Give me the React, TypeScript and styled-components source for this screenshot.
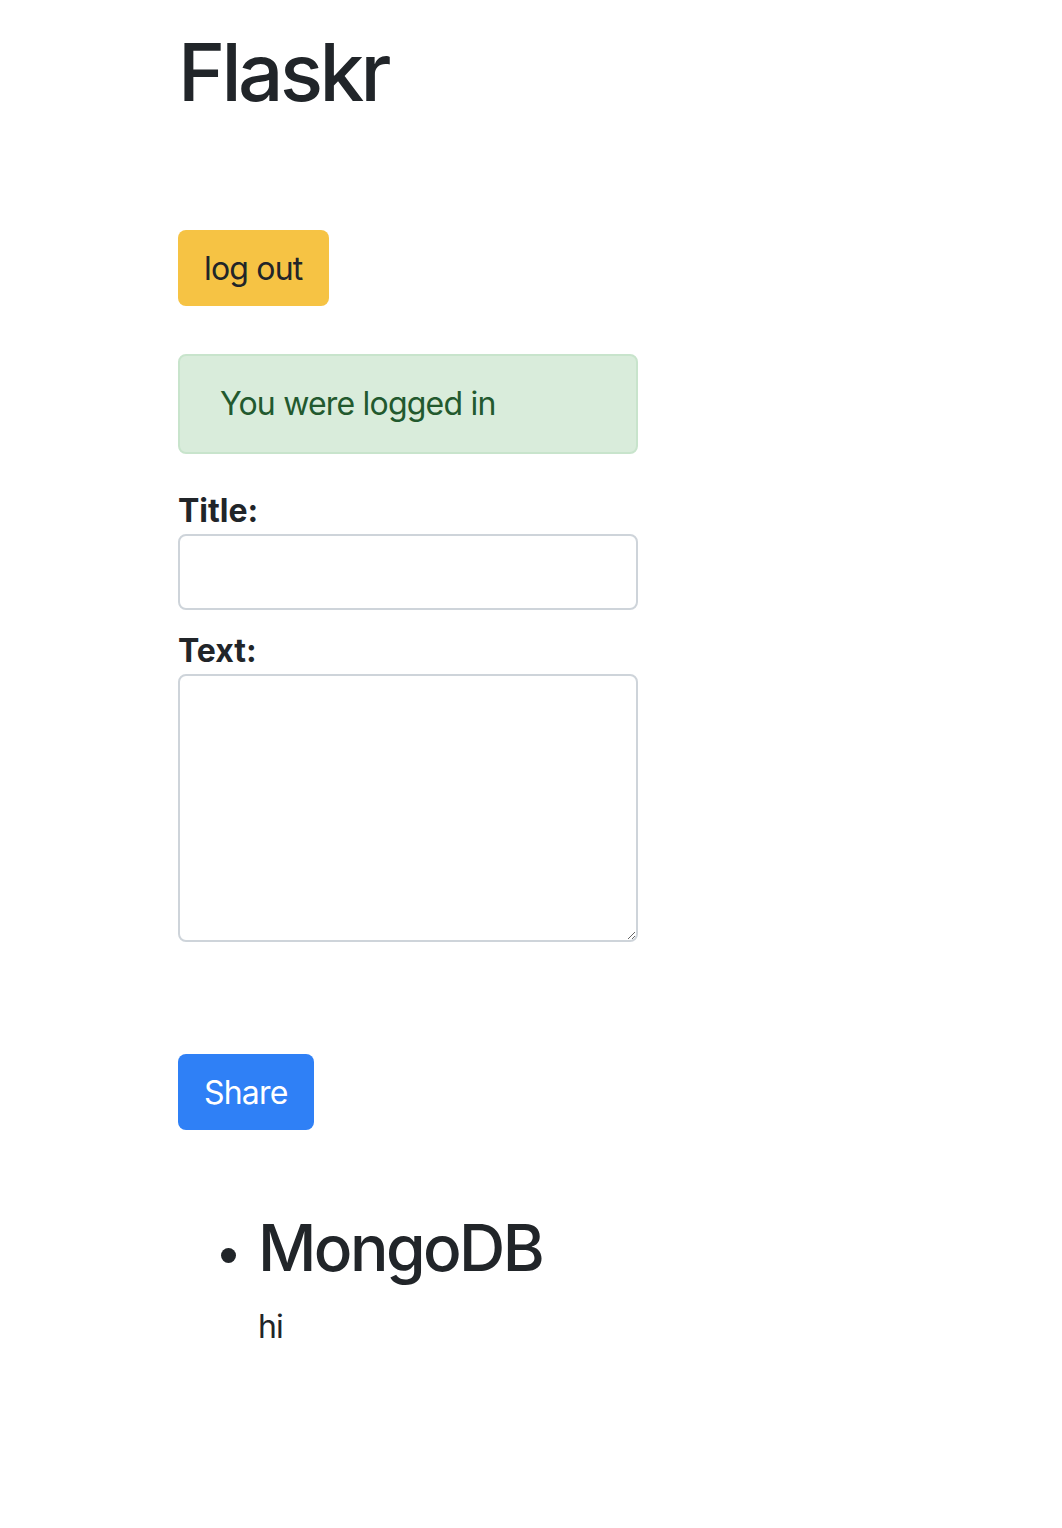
import React from 'react';
import styled, { createGlobalStyle } from 'styled-components';

const GlobalStyle = createGlobalStyle`
	body {
		margin: 0;
		background: #fff;
		color: #212529;
		font-family: Inter, "Noto Sans", "Liberation Sans", sans-serif;
		font-size: 32px;
		line-height: 1.5;
		letter-spacing: -0.025em;
	}
	* {
		box-sizing: border-box;
	}
`;

const Page = styled.div`
	width: 460px;
	margin-left: 178px;
	padding: 24px 0 160px;
`;

const Heading = styled.h1`
	margin: 0 0 110px;
	font-size: 80px;
	font-weight: 500;
	line-height: 1.2;
	letter-spacing: -0.045em;
`;

const Button = styled.button<{ $variant: 'warning' | 'primary' }>`
	display: inline-block;
	padding: 13px 24px 11px;
	border: 2px solid transparent;
	border-radius: 8px;
	font-family: inherit;
	font-size: 32px;
	line-height: 1.5;
	letter-spacing: inherit;
	cursor: pointer;
	background-color: ${({ $variant }) => ($variant === 'warning' ? '#f6c344' : '#2f80f6')};
	color: ${({ $variant }) => ($variant === 'warning' ? '#212529' : '#fff')};
`;

const Alert = styled.div`
	margin: 48px 0 32px;
	padding: 24px 40px;
	border: 2px solid #c8e4cc;
	border-radius: 8px;
	background: #d9ecdb;
	color: #22592e;
`;

const Form = styled.form`
	display: flex;
	flex-direction: column;
	align-items: flex-start;
`;

const Label = styled.label`
	font-weight: 700;
	letter-spacing: 0;
	margin-top: 1px;
	margin-bottom: -1px;
`;

const Input = styled.input`
	width: 100%;
	height: 76px;
	margin: 0 0 16px;
	padding: 12px 24px;
	border: 2px solid #ced4da;
	border-radius: 8px;
	font-family: inherit;
	font-size: 32px;
`;

const TextArea = styled.textarea`
	width: 100%;
	height: 268px;
	margin: 0 0 112px;
	padding: 12px 24px;
	border: 2px solid #ced4da;
	border-radius: 8px;
	font-family: inherit;
	font-size: 32px;
`;

const Entries = styled.ul`
	margin: 80px 0 0;
	padding-left: 80px;

	& > li::marker {
		font-size: 46px;
	}
`;

const EntryTitle = styled.h2`
	margin: 0 0 16px;
	font-size: 64px;
	font-weight: 500;
	line-height: 1.2;
	letter-spacing: -0.04em;
`;

const EntryText = styled.p`
	margin: 0 0 32px;
`;

const entries = [{ title: 'MongoDB', text: 'hi' }];

const App: React.FC = () => {
	return (
		<>
			<GlobalStyle />
			<Page>
				<Heading>Flaskr</Heading>
				<Button type="button" $variant="warning">log out</Button>
				<Alert>You were logged in</Alert>
				<Form onSubmit={(e) => e.preventDefault()}>
					<Label htmlFor="title">Title:</Label>
					<Input id="title" type="text" />
					<Label htmlFor="text">Text:</Label>
					<TextArea id="text" />
					<Button type="submit" $variant="primary">Share</Button>
				</Form>
				<Entries>
					{entries.map((entry) => (
						<li key={entry.title}>
							<EntryTitle>{entry.title}</EntryTitle>
							<EntryText>{entry.text}</EntryText>
						</li>
					))}
				</Entries>
			</Page>
		</>
	);
};

export default App;
